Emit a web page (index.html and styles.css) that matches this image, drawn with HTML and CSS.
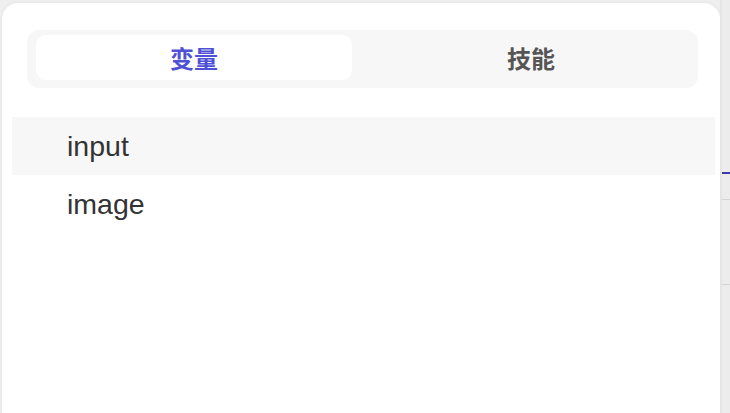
FILE: index.html
```html
<!DOCTYPE html>
<html lang="zh">
<head>
<meta charset="utf-8">
<link rel="stylesheet" href="styles.css">
</head>
<body>
<div class="page">
  <div class="panel">
    <div class="tabs">
      <div class="tab active">变量</div>
      <div class="tab">技能</div>
    </div>
    <ul class="list">
      <li class="item hover">input</li>
      <li class="item">image</li>
    </ul>
  </div>
  <div class="strip">
    <div class="line blue"></div>
    <div class="line gray l2"></div>
    <div class="line gray l3"></div>
  </div>
</div>
</body>
</html>
```

FILE: styles.css
```css
html, body {
  margin: 0;
  padding: 0;
}
body {
  background: #efefef;
  width: 730px;
  height: 413px;
  overflow: hidden;
  font-family: "Liberation Sans", "Noto Sans CJK SC", sans-serif;
}
.page {
  display: flex;
  height: 413px;
  padding-top: 3px;
  padding-left: 2px;
  box-sizing: border-box;
}
.panel {
  width: 718px;
  height: 430px;
  background: #ffffff;
  border-radius: 16px 16px 0 0;
  box-shadow: 0 0 4px rgba(0, 0, 0, 0.06);
  flex: none;
}
.tabs {
  margin: 27px 22px 0 25px;
  height: 58px;
  box-sizing: border-box;
  padding: 5px 9px 8px 9px;
  background: #f7f7f8;
  border-radius: 12px;
  display: grid;
  grid-template-columns: 1fr 1fr;
  column-gap: 21px;
}
.tab {
  display: flex;
  align-items: center;
  justify-content: center;
  border-radius: 10px;
  font-family: "Noto Sans CJK SC", sans-serif;
  font-size: 24px;
  font-weight: 700;
  color: #555555;
}
.tab.active {
  background: #ffffff;
  color: #4f51d4;
}
.list {
  list-style: none;
  margin: 29px 0 0 0;
  padding: 0 5px 0 10px;
}
.item {
  height: 58px;
  line-height: 58px;
  padding-left: 55px;
  font-size: 28.5px;
  color: #333333;
}
.item.hover {
  background: #f7f7f7;
}
.strip {
  flex: 1;
  margin-left: 0;
  margin-top: -3px;
  border-left: 2px solid #e4e4e4;
  background: #ececec;
}
.line {
  height: 1px;
}
.line.blue {
  margin-top: 172px;
  height: 2px;
  background: #3c3ca8;
}
.line.gray.l2 {
  margin-top: 25px;
  background: #d4d4d4;
}
.line.gray.l3 {
  margin-top: 84px;
  background: #d4d4d4;
}
```
